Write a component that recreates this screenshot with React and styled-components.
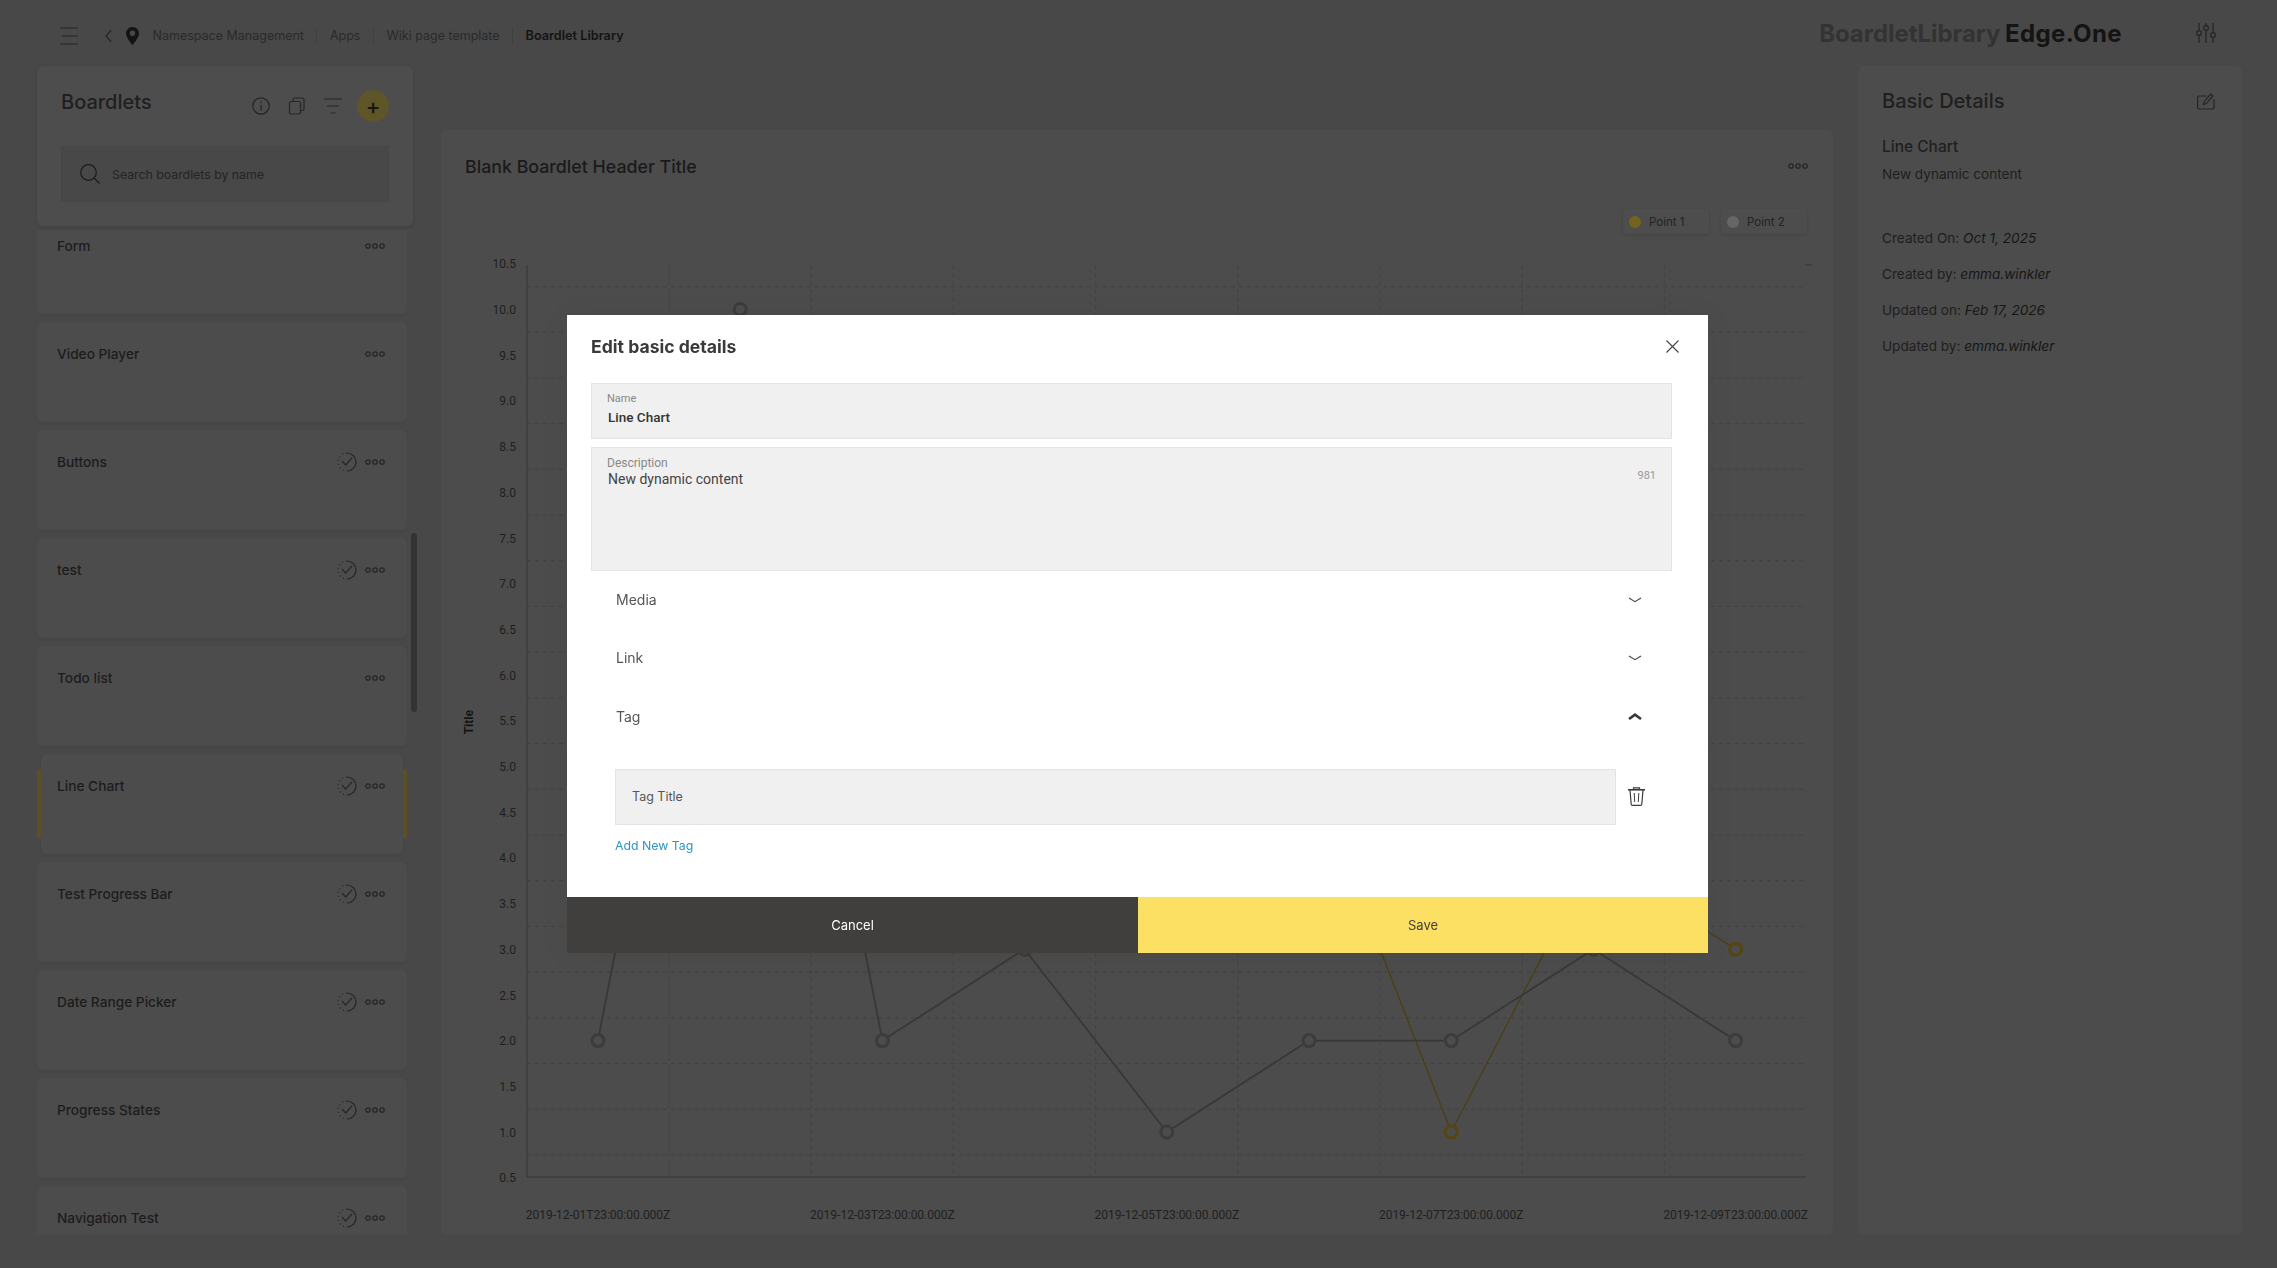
import styled, { createGlobalStyle } from "styled-components";

const GlobalStyle = createGlobalStyle`
    html, body {
        margin: 0;
        height: 100%;
        overflow: hidden;
        background: #484848;
    }
    * {
        box-sizing: border-box;
    }
    body {
        font-family: Inter, "Liberation Sans", sans-serif;
    }
`;

/* Data ---------------------------*/
const boardlets = [
    { name: "Form" },
    { name: "Video Player" },
    { name: "Buttons", done: true },
    { name: "test", done: true },
    { name: "Todo list" },
    { name: "Line Chart", done: true, active: true },
    { name: "Test Progress Bar", done: true },
    { name: "Date Range Picker", done: true },
    { name: "Progress States", done: true },
    { name: "Navigation Test", done: true },
];

const crumbs = ["Namespace Management", "Apps", "Wiki page template", "Boardlet Library"];

const meta = [
    ["Created On:", "Oct 1, 2025"],
    ["Created by:", "emma.winkler"],
    ["Updated on:", "Feb 17, 2026"],
    ["Updated by:", "emma.winkler"],
];

/* Chart helpers ---------------------------*/
const dayX = (day) => 598 + (day - 1) * 142.2;
const valueY = (v) => 1177.7 - (v - 0.5) * 91.4;

const greySeries = [2, 10, 2, 3, 1, 2, 2, 3, 2];
const yellowSeries = [4, 6, 5, 7, 5, 5, 1, 4, 3];
const ticks = Array.from({ length: 21 }, (_, i) => 0.5 + i * 0.5);
const xLabels = [1, 3, 5, 7, 9];

const toPoints = (series) => series.map((v, i) => `${dayX(i + 1)},${valueY(v)}`).join(" ");

/* Icons ---------------------------*/
const Dots = () => (
    <svg width="20" height="6" viewBox="0 0 20 6" fill="none" stroke="#262626" strokeWidth="1.3">
        <circle cx="3" cy="3" r="2.2" />
        <circle cx="10" cy="3" r="2.2" />
        <circle cx="17" cy="3" r="2.2" />
    </svg>
);

const DoneIcon = () => (
    <svg width="20" height="20" viewBox="0 0 20 20" fill="none" stroke="#262626" strokeWidth="1.2">
        <path d="M10 1a9 9 0 0 1 0 18" />
        <path d="M10 1a9 9 0 0 0 0 18" strokeDasharray="1 3" />
        <path d="M5 9l3.7 4 6.3-7.2" />
    </svg>
);

const Chevron = ({ open }) =>
    open ? (
        <svg width="14" height="8" viewBox="0 0 14 8" fill="none" stroke="#3a3a3a" strokeWidth="2.6">
            <path d="M1 7l6-4.4L13 7" />
        </svg>
    ) : (
        <svg width="14" height="8" viewBox="0 0 14 8" fill="none" stroke="#444" strokeWidth="1.1">
            <path d="M1 2l6 3.6L13 2" />
        </svg>
    );

/* App ---------------------------*/
const App = () => {
    return (
        <Page>
            <GlobalStyle />
            <TopBar>
                <TopLeft>
                    <svg width="18" height="18" viewBox="0 0 18 18" stroke="#242424" strokeWidth="1.2">
                        <path d="M0 1h18M2 9h16M0 17h18" />
                    </svg>
                    <BackIcon width="7" height="12" viewBox="0 0 7 12" fill="none" stroke="#242424" strokeWidth="1.2">
                        <path d="M6 .5L1 6l5 5.5" />
                    </BackIcon>
                    <svg width="13" height="18" viewBox="0 0 13 18">
                        <path
                            fillRule="evenodd"
                            fill="#141414"
                            d="M6.5 0A6.4 6.4 0 0 0 0 6.4C0 10.6 6.5 18 6.5 18S13 10.6 13 6.4A6.4 6.4 0 0 0 6.5 0zm0 3.6a2.7 2.7 0 1 1 0 5.4 2.7 2.7 0 0 1 0-5.4z"
                        />
                    </svg>
                    <Crumbs>
                        {crumbs.map((c, i) => (
                            <Crumb key={c} $current={i === crumbs.length - 1}>
                                {c}
                            </Crumb>
                        ))}
                    </Crumbs>
                </TopLeft>
                <TopRight>
                    <Logo>
                        BoardletLibrary <strong>Edge.One</strong>
                    </Logo>
                    <svg width="20" height="20" viewBox="0 0 20 20" fill="none" stroke="#242424" strokeWidth="1.2">
                        <path d="M3 0v7.5M3 12.5V20M10 0v2.5M10 7.5V20M17 0v9.5M17 14.5V20" />
                        <circle cx="3" cy="10" r="2.4" />
                        <circle cx="10" cy="5" r="2.4" />
                        <circle cx="17" cy="12" r="2.4" />
                    </svg>
                </TopRight>
            </TopBar>

            <Main>
                <LeftColumn>
                    <LeftHeader>
                        <LeftHeaderRow>
                            <PanelTitle>Boardlets</PanelTitle>
                            <HeaderTools>
                                <svg width="18" height="18" viewBox="0 0 18 18" fill="none" stroke="#242424" strokeWidth="1.2">
                                    <circle cx="9" cy="9" r="8.2" />
                                    <path d="M9 8v5.5M9 4.6v1.6" />
                                </svg>
                                <svg width="18" height="18" viewBox="0 0 18 18" fill="none" stroke="#262626" strokeWidth="1.2">
                                    <rect x="1.5" y="4.5" width="11" height="12.5" rx="1.5" />
                                    <path d="M5 4.5V2.5a1.5 1.5 0 0 1 1.5-1.5h8A1.5 1.5 0 0 1 16 2.5V12a1.5 1.5 0 0 1-1.5 1.5h-2" />
                                </svg>
                                <svg width="18" height="18" viewBox="0 0 18 18" stroke="#262626" strokeWidth="1.2">
                                    <path d="M0 2h18M3 9h12M6.5 16h5" />
                                </svg>
                                <AddButton>+</AddButton>
                            </HeaderTools>
                        </LeftHeaderRow>
                        <SearchBox>
                            <svg width="20" height="20" viewBox="0 0 20 20" fill="none" stroke="#1c1c1c" strokeWidth="1.2">
                                <circle cx="8.5" cy="8.5" r="7.8" />
                                <path d="M14 14l5.5 5.5" />
                            </svg>
                            <span>Search boardlets by name</span>
                        </SearchBox>
                    </LeftHeader>

                    <CardList>
                        {boardlets.map((b) => (
                            <Card key={b.name} $active={b.active}>
                                <CardTitle>{b.name}</CardTitle>
                                <CardTools>
                                    {b.done && <DoneIcon />}
                                    <Dots />
                                </CardTools>
                            </Card>
                        ))}
                    </CardList>
                    <ScrollThumb />
                </LeftColumn>

                <ChartPanel>
                    <ChartHeader>
                        <ChartTitle>Blank Boardlet Header Title</ChartTitle>
                        <Dots />
                    </ChartHeader>
                    <Legend>
                        <LegendPill>
                            <LegendDot $color="#75641f" />
                            Point 1
                        </LegendPill>
                        <LegendPill>
                            <LegendDot $color="#666666" />
                            Point 2
                        </LegendPill>
                    </Legend>
                    <ChartSvg viewBox="441 250 1392 985" width="1392" height="985">
                        {ticks.slice(0, -1).map((t) => (
                            <line
                                key={t}
                                x1="527"
                                x2="1806"
                                y1={valueY(t) - 22.8}
                                y2={valueY(t) - 22.8}
                                stroke="#424242"
                                strokeDasharray="4 4"
                            />
                        ))}
                        {Array.from({ length: 8 }, (_, i) => (
                            <line
                                key={i}
                                x1={669 + i * 142.2}
                                x2={669 + i * 142.2}
                                y1="265"
                                y2="1177"
                                stroke="#424242"
                                strokeDasharray="4 4"
                            />
                        ))}
                        <path d="M527 265V1177H1806M1805 265h7" fill="none" stroke="#343434" strokeWidth="1" />

                        {ticks.map((t) => (
                            <AxisText key={t} x="516" y={valueY(t) + 4.6} textAnchor="end">
                                {t.toFixed(1)}
                            </AxisText>
                        ))}
                        {xLabels.map((d) => (
                            <AxisText key={d} x={dayX(d)} y="1219" textAnchor="middle">
                                {`2019-12-0${d}T23:00:00.000Z`}
                            </AxisText>
                        ))}
                        <AxisTitle transform="translate(473 722) rotate(-90)" textAnchor="middle">
                            Title
                        </AxisTitle>

                        <polyline points={toPoints(yellowSeries)} fill="none" stroke="#4c3f10" strokeWidth="1.3" />
                        <polyline points={toPoints(greySeries)} fill="none" stroke="#383838" strokeWidth="1.8" />
                        {yellowSeries.map((v, i) => (
                            <circle key={i} cx={dayX(i + 1)} cy={valueY(v)} r="6" fill="#4c4c4c" stroke="#554510" strokeWidth="3" />
                        ))}
                        {greySeries.map((v, i) => (
                            <circle key={i} cx={dayX(i + 1)} cy={valueY(v)} r="6" fill="#4c4c4c" stroke="#3c3c3c" strokeWidth="3" />
                        ))}
                    </ChartSvg>
                </ChartPanel>

                <DetailsPanel>
                    <DetailsHeader>
                        <PanelTitle>Basic Details</PanelTitle>
                        <svg width="18" height="17" viewBox="0 0 18 17" fill="none" stroke="#242424" strokeWidth="1.2">
                            <path d="M10 3H2a1.4 1.4 0 0 0-1.4 1.4v10.2A1.4 1.4 0 0 0 2 16h13.6a1.4 1.4 0 0 0 1.4-1.4V6.5" />
                            <path d="M6.5 11.5l.6-2.8 6.6-7.6 2.2 1.9-6.6 7.6z" />
                        </svg>
                    </DetailsHeader>
                    <DetailsName>Line Chart</DetailsName>
                    <DetailsText>New dynamic content</DetailsText>
                    <MetaList>
                        {meta.map(([label, value]) => (
                            <DetailsText key={label + value}>
                                {label} <em>{value}</em>
                            </DetailsText>
                        ))}
                    </MetaList>
                </DetailsPanel>
            </Main>

            <Scrim>
                <Modal>
                    <ModalBody>
                        <ModalHeader>
                            <ModalTitle>Edit basic details</ModalTitle>
                            <CloseIcon width="13" height="13" viewBox="0 0 13 13" stroke="#444" strokeWidth="1.1">
                                <path d="M.5.5l12 12M12.5.5l-12 12" />
                            </CloseIcon>
                        </ModalHeader>
                        <Field>
                            <FieldLabel>Name</FieldLabel>
                            <FieldValue $strong>Line Chart</FieldValue>
                        </Field>
                        <Field $tall>
                            <FieldLabel $large>Description</FieldLabel>
                            <FieldValue>New dynamic content</FieldValue>
                            <Counter>981</Counter>
                        </Field>
                        <Accordion>
                            <AccordionRow>
                                Media
                                <Chevron />
                            </AccordionRow>
                            <AccordionRow>
                                Link
                                <Chevron />
                            </AccordionRow>
                            <AccordionRow>
                                Tag
                                <Chevron open />
                            </AccordionRow>
                        </Accordion>
                        <TagRow>
                            <TagField>Tag Title</TagField>
                            <svg width="19" height="19" viewBox="0 0 19 19" fill="none" stroke="#3c3c3c" strokeWidth="1.2">
                                <path d="M1 2.8h17" strokeWidth="1.6" />
                                <path d="M6.5 2.5V.8h6v1.7" />
                                <path d="M3 3l1.2 14.2a1.2 1.2 0 0 0 1.2 1.1h8.2a1.2 1.2 0 0 0 1.2-1.1L16 3" />
                                <path d="M7.2 6l.5 9M11.8 6l-.5 9" strokeWidth="1" />
                            </svg>
                        </TagRow>
                        <AddTag>Add New Tag</AddTag>
                    </ModalBody>
                    <ModalFooter>
                        <FooterButton>Cancel</FooterButton>
                        <FooterButton $primary>Save</FooterButton>
                    </ModalFooter>
                </Modal>
            </Scrim>
        </Page>
    );
};

export default App;

/* Page ---------------------------*/
const Page = styled.div`
    width: 2277px;
    height: 1268px;
    overflow: hidden;
    background: #484848;
`;

const TopBar = styled.header`
    height: 66px;
    padding: 0 61px 0 60px;
    display: flex;
    align-items: center;
    justify-content: space-between;
`;

const TopLeft = styled.div`
    padding-top: 5px;
    display: flex;
    align-items: center;
`;

const BackIcon = styled.svg`
    margin: 0 14px 0 27px;
`;

const Crumbs = styled.nav`
    display: flex;
    align-items: center;
    margin-left: 1px;
`;

const Crumb = styled.span`
    padding: 0 12.5px;
    line-height: 16px;
    font-size: ${(p) => (p.$current ? "12.7px" : "12.5px")};
    font-weight: ${(p) => (p.$current ? 600 : 400)};
    color: ${(p) => (p.$current ? "#141414" : "#2a2a2a")};
    border-left: 1px solid #404040;

    &:first-child {
        border-left: none;
    }
`;

const TopRight = styled.div`
    display: flex;
    align-items: center;
    gap: 74px;
`;

const Logo = styled.div`
    font-size: 24px;
    font-weight: 700;
    letter-spacing: -0.05px;
    word-spacing: -1px;
    color: #333333;

    strong {
        font-weight: 700;
        letter-spacing: 0.4px;
        color: #141414;
    }
`;

const Main = styled.main`
    display: flex;
    height: 1169px;
    margin-left: 37px;
`;

/* Left column ---------------------------*/
const LeftColumn = styled.div`
    position: relative;
    width: 376px;
    height: 100%;
    display: flex;
    flex-direction: column;
    gap: 4px;
`;

const LeftHeader = styled.div`
    position: relative;
    z-index: 1;
    padding: 24px;
    height: 160px;
    background: #4d4d4d;
    border-radius: 6px;
    box-shadow: 0 1px 4px rgba(0, 0, 0, 0.12);
`;

const LeftHeaderRow = styled.div`
    display: flex;
    align-items: flex-start;
    justify-content: space-between;
`;

const PanelTitle = styled.h2`
    margin: 0;
    font-size: 20px;
    line-height: 24px;
    font-weight: 500;
    color: #1f1f1f;
`;

const HeaderTools = styled.div`
    display: flex;
    align-items: center;
    gap: 18px;
    height: 32px;
`;

const AddButton = styled.div`
    width: 32px;
    height: 32px;
    margin-left: -3px;
    display: flex;
    align-items: center;
    justify-content: center;
    border-radius: 50%;
    background: #5e5528;
    color: #161616;
    font-size: 22px;
    font-weight: 500;
    line-height: 1;
`;

const SearchBox = styled.div`
    height: 56px;
    margin-top: 24px;
    padding-left: 18px;
    display: flex;
    align-items: center;
    gap: 12px;
    background: #484848;
    border: 1px solid #464646;
    font-size: 12.3px;
    color: #242424;
`;

const CardList = styled.div`
    flex: 1;
    width: 370px;
    min-height: 0;
    overflow: hidden;
    display: flex;
    flex-direction: column;
    gap: 8px;

    & > :first-child {
        margin-top: -16px;
    }
`;

const Card = styled.div`
    position: relative;
    flex: none;
    height: 100px;
    margin: ${(p) => (p.$active ? "0 4px" : "0")};
    padding: ${(p) => (p.$active ? "22px 18px 0 16px" : "22px 22px 0 20px")};
    display: flex;
    align-items: flex-start;
    justify-content: space-between;
    background: #4c4c4c;
    border-radius: 6px;
    box-shadow: 0 1px 3px rgba(0, 0, 0, 0.06);

    ${(p) =>
        p.$active &&
        `
        &::before, &::after {
            content: "";
            position: absolute;
            top: 16px;
            bottom: 16px;
            width: 4px;
            background: #5c5022;
        }
        &::before { left: -4px; }
        &::after { right: -4px; }
    `}
`;

const CardTitle = styled.div`
    font-size: 13.7px;
    line-height: 20px;
    font-weight: 500;
    color: #1c1c1c;
`;

const CardTools = styled.div`
    display: flex;
    align-items: center;
    gap: 8px;
    height: 20px;
`;

const ScrollThumb = styled.div`
    position: absolute;
    left: 374px;
    top: 467px;
    width: 6px;
    height: 179px;
    border-radius: 3px;
    background: #333333;
`;

/* Chart ---------------------------*/
const ChartPanel = styled.section`
    width: 1392px;
    height: 1105px;
    margin: 64px 25px 0 28px;
    background: #4c4c4c;
    border-radius: 6px;
`;

const ChartHeader = styled.div`
    height: 72px;
    padding: 0 25px 0 24px;
    display: flex;
    align-items: center;
    justify-content: space-between;
`;

const ChartTitle = styled.h3`
    margin: 0;
    font-size: 17.8px;
    font-weight: 500;
    color: #1a1a1a;
`;

const Legend = styled.div`
    display: flex;
    justify-content: flex-end;
    gap: 12px;
    height: 25px;
    margin: 7px 26px 16px 0;
`;

const LegendPill = styled.div`
    width: 86px;
    padding-left: 6px;
    display: flex;
    align-items: center;
    gap: 8px;
    border-radius: 4px;
    background: #4d4d4d;
    box-shadow: 0 1px 3px rgba(0, 0, 0, 0.14);
    font-size: 11.5px;
    color: #232323;
`;

const LegendDot = styled.span`
    width: 12px;
    height: 12px;
    border-radius: 50%;
    background: ${(p) => p.$color};
`;

const ChartSvg = styled.svg`
    display: block;
`;

const AxisText = styled.text`
    font-family: Roboto, "Liberation Sans", sans-serif;
    font-size: 12px;
    fill: #202020;
`;

const AxisTitle = styled.text`
    font-family: "Liberation Sans", sans-serif;
    font-size: 12px;
    font-weight: 700;
    fill: #141414;
`;

/* Details ---------------------------*/
const DetailsPanel = styled.aside`
    width: 384px;
    height: 100%;
    padding: 23px 24px;
    background: #4c4c4c;
    border-radius: 6px;
`;

const DetailsHeader = styled.div`
    display: flex;
    align-items: center;
    justify-content: space-between;
    padding-right: 3px;
`;

const DetailsName = styled.div`
    margin-top: 24px;
    font-size: 15.5px;
    line-height: 20px;
    font-weight: 500;
    color: #1f1f1f;
`;

const DetailsText = styled.div`
    margin-top: 8px;
    font-size: 13.6px;
    line-height: 19.5px;
    color: #1e1e1e;

    em {
        color: #161616;
    }
`;

const MetaList = styled.div`
    margin-top: 36.5px;
    display: flex;
    flex-direction: column;
    gap: 8.5px;
`;

/* Modal ---------------------------*/
const Scrim = styled.div`
    position: fixed;
    inset: 0;
    z-index: 10;
    display: flex;
    align-items: center;
    justify-content: center;
`;

const Modal = styled.div`
    width: 1141px;
    height: 638px;
    margin-right: 2px;
    display: flex;
    flex-direction: column;
    background: #ffffff;
    box-shadow: 0 2px 30px rgba(0, 0, 0, 0.05);
`;

const ModalBody = styled.div`
    flex: 1;
    padding: 19.5px 36px 0 24px;
`;

const ModalHeader = styled.div`
    height: 24px;
    margin-bottom: 24.5px;
    display: flex;
    align-items: center;
    justify-content: space-between;
`;

const ModalTitle = styled.h3`
    margin: 0;
    font-size: 17.6px;
    font-weight: 700;
    color: #3a3a3a;
`;

const CloseIcon = styled.svg`
    margin-right: -7px;
`;

const Field = styled.div`
    position: relative;
    height: ${(p) => (p.$tall ? "124px" : "56px")};
    margin-bottom: 8px;
    padding: 8px 15px 0;
    background: #f0f0f0;
    border: 1px solid #e4e4e4;
    font-family: Roboto, "Liberation Sans", sans-serif;
`;

const FieldLabel = styled.div`
    font-size: ${(p) => (p.$large ? "12px" : "11px")};
    line-height: 14px;
    color: #888888;
`;

const FieldValue = styled.div`
    margin-top: ${(p) => (p.$strong ? "2px" : "0")};
    padding-left: 1px;
    font-size: ${(p) => (p.$strong ? "13.5px" : "14px")};
    line-height: 18px;
    font-weight: ${(p) => (p.$strong ? 500 : 400)};
    color: ${(p) => (p.$strong ? "#333333" : "#444444")};
`;

const Counter = styled.div`
    position: absolute;
    top: 21px;
    right: 15px;
    font-size: 11px;
    line-height: 14px;
    color: #999999;
`;

const Accordion = styled.div`
    margin-top: -8.5px;
`;

const AccordionRow = styled.div`
    height: 58.3px;
    padding: 0 30px 0 25px;
    display: flex;
    align-items: center;
    justify-content: space-between;
    font-size: 14px;
    color: #555555;
`;

const TagRow = styled.div`
    margin-top: 23.5px;
    padding-left: 24px;
    display: flex;
    align-items: center;
    gap: 11px;
`;

const TagField = styled.div`
    width: 1001px;
    height: 56px;
    padding-left: 16px;
    display: flex;
    align-items: center;
    background: #f0f0f0;
    border: 1px solid #e4e4e4;
    font-size: 12.5px;
    color: #555555;
`;

const AddTag = styled.div`
    margin: 11px 0 0 24px;
    font-size: 12.3px;
    line-height: 20px;
    color: #2e94c4;
`;

const ModalFooter = styled.div`
    flex: none;
    height: 56px;
    display: grid;
    grid-template-columns: 571px 1fr;
`;

const FooterButton = styled.div`
    display: flex;
    align-items: center;
    justify-content: center;
    background: ${(p) => (p.$primary ? "#fbe063" : "#403f3d")};
    color: ${(p) => (p.$primary ? "#403f3d" : "#ffffff")};
    font-size: 13px;
`;
